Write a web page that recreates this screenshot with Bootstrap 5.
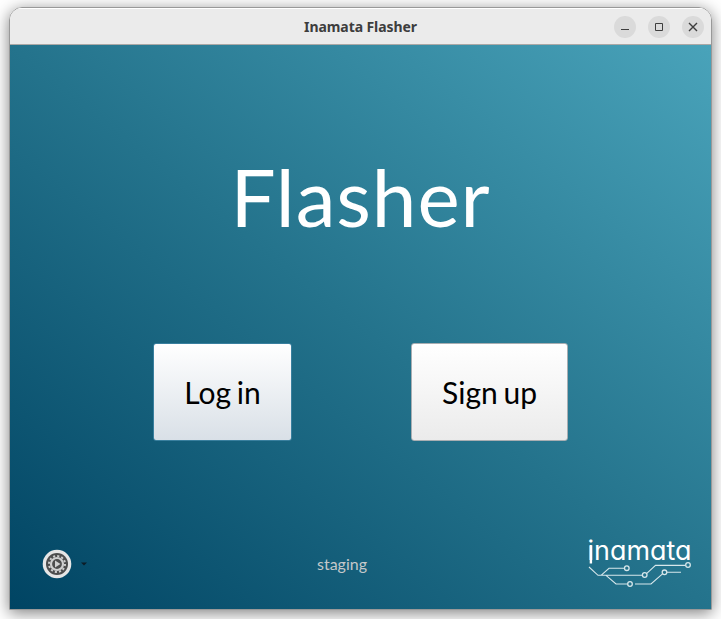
<!DOCTYPE html>
<html lang="en">
<head>
<meta charset="utf-8">
<title>Inamata Flasher</title>
<link rel="stylesheet" href="https://cdn.jsdelivr.net/npm/bootstrap@5.3.0/dist/css/bootstrap.min.css">
<style>
body{width:721px;height:619px;padding:7px 9px 9px;background:#fff;font-family:Lato,sans-serif}
.window{width:703px;height:603px;border:1px solid #999;border-radius:13px 13px 0 0;box-shadow:0 3px 16px rgba(0,0,0,.5)}
.titlebar{height:37px;background:#ebebeb;border-bottom:1px solid #aaa8a6;box-shadow:inset 0 1px #fff;display:grid;grid-template-columns:1fr auto 1fr;padding:0 7px 0 7px}
.win-title{font:700 14px/36px "Noto Sans",sans-serif;color:#3d3d3d;width:114px;white-space:nowrap;letter-spacing:-.08px;padding-top:1px}
.win-btn{width:22px;height:22px;background:#dadada}
.screen{height:564px;background:linear-gradient(to top right,#004463,#24738c 50%,#49a3ba)}
.hero-title{font-size:80px;line-height:96px;padding-top:103px;color:#fff;letter-spacing:.9px}
.choices{padding-top:99px;gap:119px}
.choice{height:98px;font-size:30px;line-height:36px;color:#000;border:1px solid #a9aeb2;border-radius:3px;background:linear-gradient(#fff,#ebebeb);word-spacing:-2px}
.choice-login{width:139px;border-color:#397f9e;background:linear-gradient(#fff,#d9e0e7)}
.choice-signup{width:157px}
.footer-bar{display:grid;grid-template-columns:276px auto 1fr;padding:0 20px 18px 31px}
.env-label{font-size:16px;line-height:20px;color:#c4c8ca;padding-bottom:17px}
.gear-icon{margin-bottom:11px}
.brand-text{font:400 26.5px Inter,sans-serif;font-feature-settings:"cv11"}
</style>
<script src="https://cdn.jsdelivr.net/npm/bootstrap@5.3.0/dist/js/bootstrap.bundle.min.js"></script>
</head>
<body class="overflow-hidden">
<main class="window overflow-hidden">
  <header class="titlebar align-items-center">
    <span></span>
    <div class="win-title text-center">Inamata Flasher</div>
    <div class="d-flex justify-content-end gap-1">
      <svg class="win-btn rounded-circle me-2" viewBox="0 0 22 22"><path d="M7 13.5h8" stroke="#3d3d3d"/></svg>
      <svg class="win-btn rounded-circle me-2" viewBox="0 0 22 22"><path d="M7.500 7.500h7v7h-7z" fill="none" stroke="#3d3d3d"/></svg>
      <svg class="win-btn rounded-circle" viewBox="0 0 22 22"><path d="m7 7 8 8m0-8-8 8" stroke="#3d3d3d" stroke-width="1.4"/></svg>
    </div>
  </header>
  <section class="screen d-flex flex-column">
    <h1 class="hero-title text-center fw-normal mb-0">Flasher</h1>
    <div class="choices d-flex justify-content-center">
      <button class="choice choice-login p-0">Log in</button>
      <button class="choice choice-signup p-0">Sign up</button>
    </div>
    <footer class="footer-bar mt-auto align-items-end">
      <div class="d-flex">
        <svg width="60" height="32" viewBox="0 0 60 32" class="gear-icon">
          <circle cx="16" cy="16" r="14.3" fill="#e6e6e6"/><circle cx="16" cy="16" r="11" fill="#4d4d4d"/>
          <circle cx="16" cy="16" r="8" fill="none" stroke="#d0d0d0" stroke-width="2" stroke-dasharray="2.1 2.089"/>
          <circle cx="16" cy="16" r="6" fill="none" stroke="#d0d0d0" stroke-width="2.2"/>
          <path d="M14 12.500v7l5.500-3.500z" fill="#d0d0d0"/>
          <path d="M40 14.500h6l-3 3z" fill="#0d1c26"/>
        </svg>
      </div>
      <div class="env-label">staging</div>
      <div class="d-flex justify-content-end">
        <svg width="108" height="64" viewBox="583 527 108 64" fill="none" stroke="#d7e7eb" stroke-width="1.1" overflow="visible">
          <text class="brand-text" x="587.500" y="559.500" fill="#fff" stroke="none" textLength="104" lengthAdjust="spacingAndGlyphs">inamata</text>
          <path d="M590.900 546v17.500" stroke="#fff" stroke-width="2.4"/>
          <path d="m589 567 9 8.300h44.400m4.400-2 8.700-7.900h30M601 575.300l8-7h15.500M606 575.300l10 8.700h11.500M635 584h16l11.500-10.200m4.500-1.500h14"/>
          <g stroke-width="1.300"><circle cx="626.800" cy="568.200" r="2.300"/><circle cx="644.700" cy="575" r="2.300"/><circle cx="688" cy="565" r="2.300"/><circle cx="664.500" cy="572.300" r="2.300"/><circle cx="630" cy="584" r="2.300"/></g>
        </svg>
      </div>
    </footer>
  </section>
</main>
</body>
</html>
